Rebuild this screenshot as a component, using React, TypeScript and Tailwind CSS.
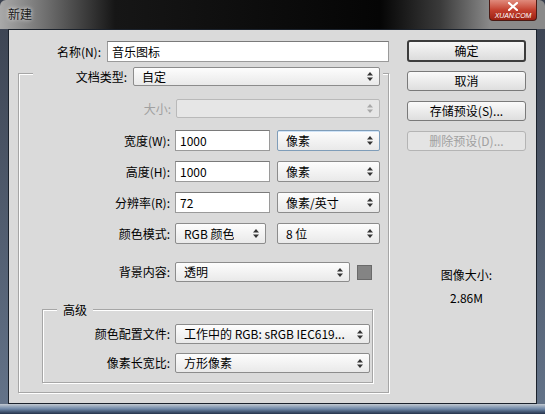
import React from "react";

const font = { fontFamily: '"Noto Sans CJK SC", "Liberation Sans", sans-serif' };

function Arrows({ dim = false }: { dim?: boolean }) {
  const c = dim ? "#a8a8a8" : "#333";
  return (
    <svg width="6" height="9" viewBox="0 0 6 9" className="shrink-0">
      <path d="M3 0 L6 3.5 L0 3.5 Z" fill={c} />
      <path d="M0 5.5 L6 5.5 L3 9 Z" fill={c} />
    </svg>
  );
}

function Select({
  value,
  w,
  h = 20,
  disabled = false,
  focused = false,
}: {
  value: string;
  w: string;
  h?: number;
  disabled?: boolean;
  focused?: boolean;
}) {
  return (
    <div
      className={`${w} flex items-center justify-between rounded-[2px] border pl-[8px] pr-[6px] ${
        disabled
          ? "border-[#b9b9b9] bg-[#e6e6e6]"
          : focused
            ? "border-[#7f9db9] bg-gradient-to-b from-[#fdfdfd] to-[#e9e9e9] shadow-[inset_0_1px_0_#cfe3f7]"
            : "border-[#8c8c8c] bg-gradient-to-b from-[#fdfdfd] to-[#e9e9e9]"
      }`}
      style={{ height: h }}
    >
      <span className="truncate text-[12px] leading-[16px] text-black">{value}</span>
      <Arrows dim={disabled} />
    </div>
  );
}

function Input({ value, w, h = 21 }: { value: string; w: string; h?: number }) {
  return (
    <div
      className={`${w} flex items-center border border-[#9a9a9a] border-t-[#7a7a7a] bg-white pl-[4px] text-[12px] leading-[16px] text-black`}
      style={{ height: h }}
    >
      {value}
    </div>
  );
}

function Button({
  label,
  primary = false,
  disabled = false,
  h = 20,
}: {
  label: string;
  primary?: boolean;
  disabled?: boolean;
  h?: number;
}) {
  return (
    <div
      className={`flex w-[119px] items-center justify-center rounded-[3px] text-[12px] leading-[16px] ${
        primary
          ? "border-2 border-[#3c3c3c] bg-gradient-to-b from-[#f7f7f7] to-[#dcdcdc]"
          : disabled
            ? "border border-[#b4b4b4] bg-[#e4e4e4] text-[#a0a0a0]"
            : "border border-[#7a7a7a] bg-gradient-to-b from-[#fafafa] to-[#dedede]"
      }`}
      style={{ height: h }}
    >
      {label}
    </div>
  );
}

function Label({ text, w, dim = false }: { text: string; w: string; dim?: boolean }) {
  return (
    <span className={`${w} shrink-0 text-right text-[12px] leading-[16px] ${dim ? "text-[#a0a0a0]" : "text-black"}`}>
      {text}
    </span>
  );
}

export default function App() {
  return (
    <div
      className="relative h-[414px] w-[545px] overflow-hidden bg-gradient-to-b from-[#3b4250] to-[#64748a] text-black"
      style={font}
    >
      {/* title bar */}
      <div className="flex h-[29px] items-start rounded-t-[6px] bg-[linear-gradient(to_right,#a9a9a9_0px,#707070_45px,#161616_115px,#050505_380px,#3a3a3a_440px,#8a8a8a_490px)]">
        <span className="ml-[8px] mt-[6px] text-[12px] leading-[16px] text-[#1a1a1a] [text-shadow:0_0_4px_#fff]">
          新建
        </span>
        <div className="ml-auto mr-[8px] flex h-[21px] w-[48px] flex-col items-center rounded-b-[4px] border border-t-0 border-[#4a1a14] bg-gradient-to-b from-[#e08a7c] via-[#c4402f] to-[#9c1f10]">
          <svg width="10" height="9" viewBox="0 0 10 9" className="mt-[2px]">
            <path d="M1 1 L9 8 M9 1 L1 8" stroke="#fff" strokeWidth="2.2" strokeLinecap="square" />
          </svg>
          <span
            className="mt-[1px] text-[7px] italic leading-[8px] tracking-tight text-white"
            style={{ fontFamily: '"Liberation Sans", sans-serif' }}
          >
            XUAN.COM
          </span>
        </div>
      </div>

      {/* client area */}
      <div className="mx-[8px] flex h-[375px] border border-[#1b222c] bg-[#dadada]">
        {/* left column */}
        <div className="flex w-[380px] flex-col pl-[9px]">
          <div className="mt-[11px] flex items-center">
            <Label text="名称(N):" w="w-[83px]" />
            <div className="ml-[6px]">
              <Input value="音乐图标" w="w-[282px]" />
            </div>
          </div>

          {/* main group */}
          <div className="mt-[11px] h-[320px] w-[371px] border border-[#a6a6a6] shadow-[inset_1px_1px_0_#fff,1px_1px_0_#fff]">
            <div className="-mt-[7px] ml-[14px] flex w-[350px] items-center bg-[#dadada]">
              <Label text="文档类型:" w="w-[94px]" />
              <div className="ml-[6px]">
                <Select value="自定" w="w-[247px]" h={19} />
              </div>
            </div>

            <div className="mt-[13px] flex items-center">
              <Label text="大小:" w="w-[152px]" dim />
              <div className="ml-[5px]">
                <Select value="" w="w-[204px]" h={19} disabled />
              </div>
            </div>

            <div className="mt-[12px] flex items-center">
              <Label text="宽度(W):" w="w-[151px]" />
              <div className="ml-[5px] flex gap-[7px]">
                <Input value="1000" w="w-[95px]" />
                <Select value="像素" w="w-[103px]" h={21} focused />
              </div>
            </div>

            <div className="mt-[10px] flex items-center">
              <Label text="高度(H):" w="w-[151px]" />
              <div className="ml-[5px] flex gap-[7px]">
                <Input value="1000" w="w-[95px]" />
                <Select value="像素" w="w-[103px]" h={21} />
              </div>
            </div>

            <div className="mt-[10px] flex items-center">
              <Label text="分辨率(R):" w="w-[151px]" />
              <div className="ml-[5px] flex gap-[7px]">
                <Input value="72" w="w-[95px]" />
                <Select value="像素/英寸" w="w-[103px]" h={21} />
              </div>
            </div>

            <div className="mt-[10px] flex items-center">
              <Label text="颜色模式:" w="w-[151px]" />
              <div className="ml-[5px] flex gap-[11px]">
                <Select value="RGB 颜色" w="w-[91px]" h={21} />
                <Select value="8 位" w="w-[103px]" h={21} />
              </div>
            </div>

            <div className="mt-[18px] flex items-center">
              <Label text="背景内容:" w="w-[151px]" />
              <div className="ml-[5px] flex items-center gap-[7px]">
                <Select value="透明" w="w-[175px]" h={20} />
                <div className="h-[15px] w-[15px] border border-[#6a6a6a] bg-[#848484]" />
              </div>
            </div>

            {/* advanced group */}
            <div className="ml-[23px] mt-[27px] h-[74px] w-[331px] border border-[#a6a6a6] shadow-[inset_1px_1px_0_#fff,1px_1px_0_#fff]">
              <div className="-mt-[8px] ml-[14px] w-fit bg-[#dadada] px-[6px] text-[12px] leading-[16px]">高级</div>
              <div className="mt-[6px] flex items-center">
                <Label text="颜色配置文件:" w="w-[127px]" />
                <div className="ml-[5px]">
                  <Select value="工作中的 RGB: sRGB IEC619..." w="w-[195px]" h={20} />
                </div>
              </div>
              <div className="mt-[9px] flex items-center">
                <Label text="像素长宽比:" w="w-[127px]" />
                <div className="ml-[5px]">
                  <Select value="方形像素" w="w-[195px]" h={20} />
                </div>
              </div>
            </div>
          </div>
        </div>

        {/* right column */}
        <div className="flex flex-1 flex-col pl-[18px]">
          <div className="mt-[10px]">
            <Button label="确定" primary h={22} />
          </div>
          <div className="mt-[9px]">
            <Button label="取消" />
          </div>
          <div className="mt-[10px]">
            <Button label="存储预设(S)..." />
          </div>
          <div className="mt-[10px]">
            <Button label="删除预设(D)..." disabled />
          </div>
          <div className="mt-[116px] w-[119px] text-center text-[12px] leading-[16px]">图像大小:</div>
          <div className="mt-[7px] w-[119px] text-center text-[12px] leading-[16px]">2.86M</div>
        </div>
      </div>

      {/* bottom frame */}
      <div className="h-[10px] bg-gradient-to-b from-[#c2c9d1] via-[#6d86a6] to-[#24324a]" />
    </div>
  );
}
